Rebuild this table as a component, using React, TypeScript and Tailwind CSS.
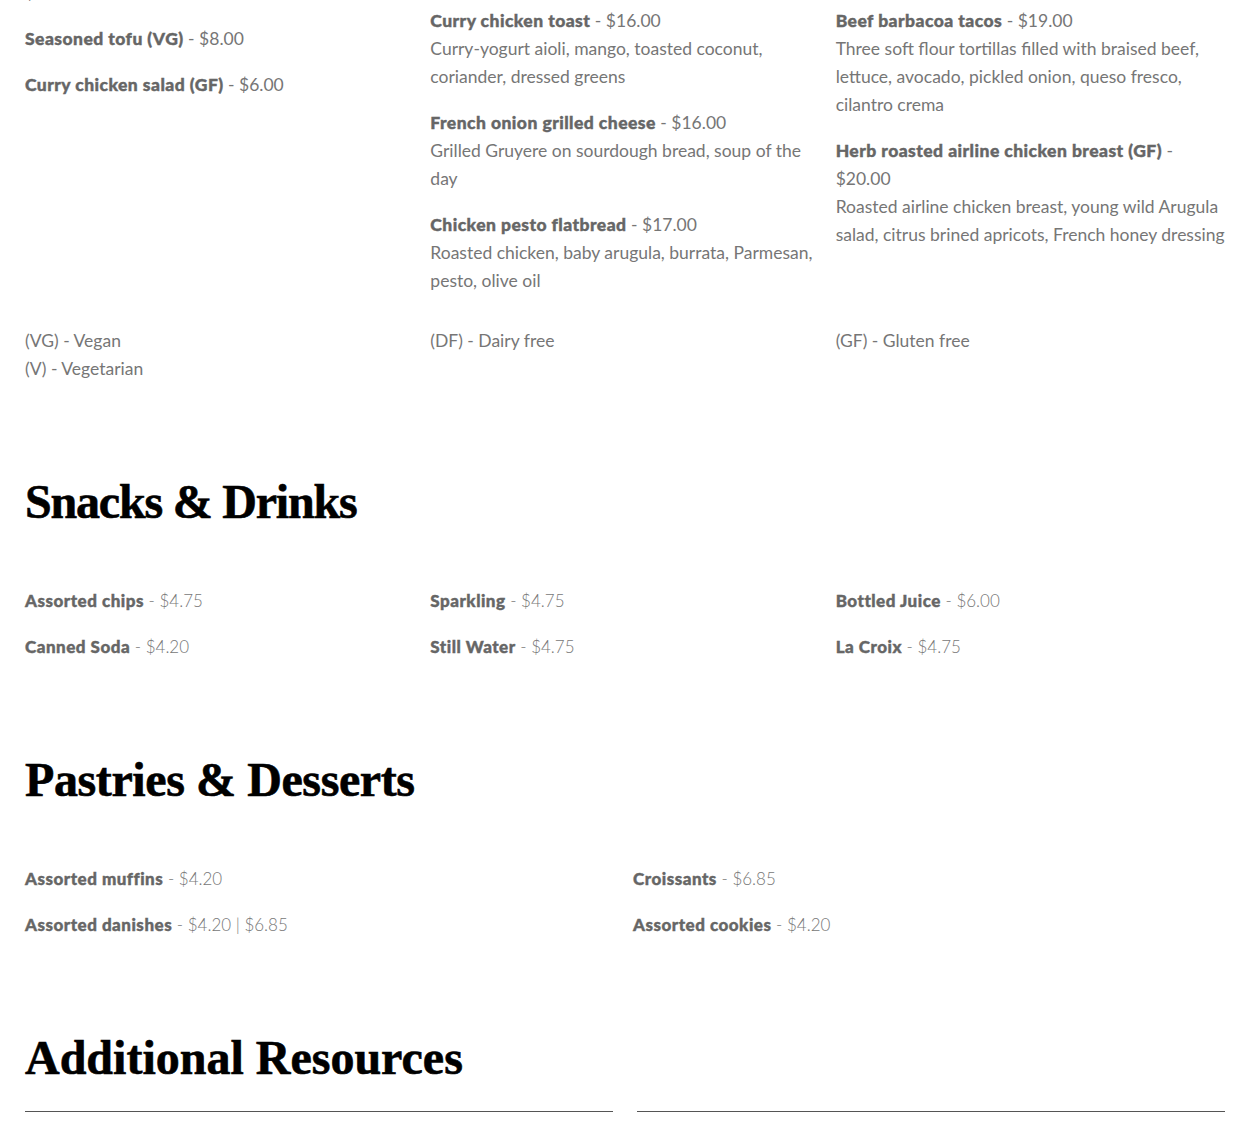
import React from "react";

type Item = { name: string; price: string; desc?: string };

const col1: Item[] = [
  { name: "Seasoned tofu (VG)", price: "$8.00" },
  { name: "Curry chicken salad (GF)", price: "$6.00" },
];
const col2: Item[] = [
  { name: "Curry chicken toast", price: "$16.00", desc: "Curry-yogurt aioli, mango, toasted coconut, coriander, dressed greens" },
  { name: "French onion grilled cheese", price: "$16.00", desc: "Grilled Gruyere on sourdough bread, soup of the day" },
  { name: "Chicken pesto flatbread", price: "$17.00", desc: "Roasted chicken, baby arugula, burrata, Parmesan, pesto, olive oil" },
];
const col3: Item[] = [
  { name: "Beef barbacoa tacos", price: "$19.00", desc: "Three soft flour tortillas filled with braised beef, lettuce, avocado, pickled onion, queso fresco, cilantro crema" },
  { name: "Herb roasted airline chicken breast (GF)", price: "$20.00", desc: "Roasted airline chicken breast, young wild Arugula salad, citrus brined apricots, French honey dressing" },
];

function TopItem({ item }: { item: Item }) {
  return (
    <div className="text-[17.5px] leading-[28px] text-[#767676]">
      <p>
        <strong className="font-black text-[#666666] tracking-[0.45px] [-webkit-text-stroke:0.4px_#666666]">{item.name}</strong> - {item.price}
      </p>
      {item.desc && <p>{item.desc}</p>}
    </div>
  );
}

function SimpleItem({ item }: { item: Item }) {
  return (
    <p className="text-[17px] leading-[28px] text-[#777777] font-light">
      <strong className="font-black text-[#666666] tracking-[0.5px] [-webkit-text-stroke:0.4px_#666666]">{item.name}</strong> - {item.price}
    </p>
  );
}

function Heading({ children, className }: { children: React.ReactNode; className: string }) {
  return (
    <h2
      className={"text-[48px] leading-[58px] font-bold text-black [-webkit-text-stroke:0.6px_#000] " + className}
      style={{ fontFamily: '"Liberation Serif", "DejaVu Serif", serif' }}
    >
      {children}
    </h2>
  );
}

export default function App() {
  const snacks: Item[][] = [
    [
      { name: "Assorted chips", price: "$4.75" },
      { name: "Canned Soda", price: "$4.20" },
    ],
    [
      { name: "Sparkling", price: "$4.75" },
      { name: "Still Water", price: "$4.75" },
    ],
    [
      { name: "Bottled Juice", price: "$6.00" },
      { name: "La Croix", price: "$4.75" },
    ],
  ];
  const pastries: Item[][] = [
    [
      { name: "Assorted muffins", price: "$4.20" },
      { name: "Assorted danishes", price: "$4.20 | $6.85" },
    ],
    [
      { name: "Croissants", price: "$6.85" },
      { name: "Assorted cookies", price: "$4.20" },
    ],
  ];
  return (
    <div
      className="bg-white w-[1250px] min-h-[1133px] overflow-hidden px-[25px] pt-[7px]"
      style={{ fontFamily: 'Lato, "Liberation Sans", sans-serif' }}
    >
      <div className="grid grid-cols-3 gap-x-[16px]">
        <div className="flex flex-col gap-[18px] -mt-[28px]">
          <p className="text-[17.5px] leading-[28px] text-[#767676]">$9.00</p>
          {col1.map((it) => (
            <TopItem key={it.name} item={it} />
          ))}
        </div>
        <div className="flex flex-col gap-[18px]">
          {col2.map((it) => (
            <TopItem key={it.name} item={it} />
          ))}
        </div>
        <div className="flex flex-col gap-[18px]">
          {col3.map((it) => (
            <TopItem key={it.name} item={it} />
          ))}
        </div>
      </div>

      <div className="grid grid-cols-3 gap-x-[16px] mt-[32px] text-[17.5px] leading-[28px] text-[#767676]">
        <div>
          <p>(VG) - Vegan</p>
          <p>(V) - Vegetarian</p>
        </div>
        <div>
          <p>(DF) - Dairy free</p>
        </div>
        <div>
          <p>(GF) - Gluten free</p>
        </div>
      </div>

      <section className="mt-[90px]">
        <Heading className="tracking-[-1.2px]">Snacks &amp; Drinks</Heading>
        <div className="grid grid-cols-3 gap-x-[16px] mt-[56px]">
          {snacks.map((c, i) => (
            <div key={i} className="flex flex-col gap-[18px]">
              {c.map((it) => (
                <SimpleItem key={it.name} item={it} />
              ))}
            </div>
          ))}
        </div>
      </section>

      <section className="mt-[90px]">
        <Heading className="tracking-[-0.4px]">Pastries &amp; Desserts</Heading>
        <div className="grid grid-cols-2 gap-x-[16px] mt-[56px]">
          {pastries.map((c, i) => (
            <div key={i} className="flex flex-col gap-[18px]">
              {c.map((it) => (
                <SimpleItem key={it.name} item={it} />
              ))}
            </div>
          ))}
        </div>
      </section>

      <section className="mt-[90px]">
        <Heading className="tracking-[0px]">Additional Resources</Heading>
        <div className="grid grid-cols-2 gap-x-[24px] mt-[24px]">
          <div className="border-t border-[#555555]" />
          <div className="border-t border-[#555555]" />
        </div>
      </section>
    </div>
  );
}
